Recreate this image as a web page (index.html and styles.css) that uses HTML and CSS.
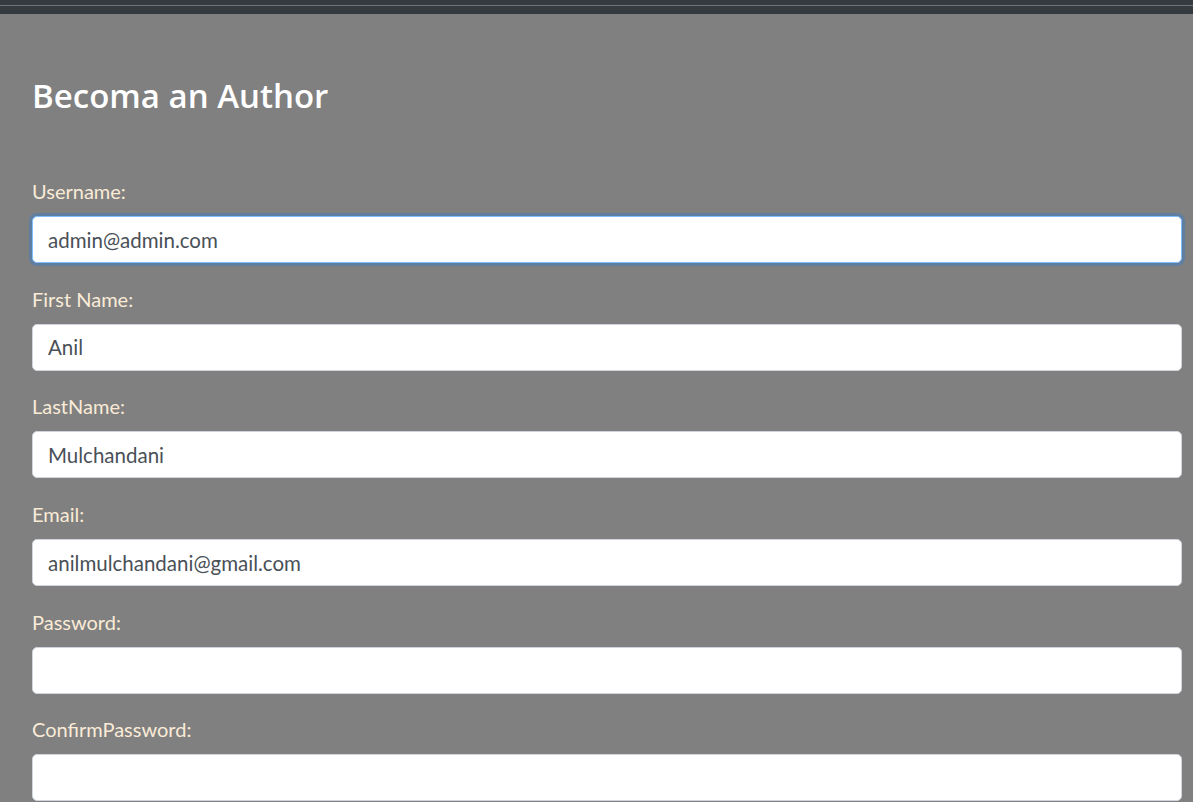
FILE: index.html
```html
<!DOCTYPE html>
<html lang="en">
<head>
<meta charset="utf-8">
<title>Becoma an Author</title>
<link rel="stylesheet" href="styles.css">
</head>
<body>
<div class="topbar"><div class="topbar-line"></div></div>
<main class="page">
  <h2 class="title">Becoma an Author</h2>
  <form class="form">
    <div class="group">
      <label class="label" for="username">Username:</label>
      <input class="field field-focus" id="username" type="text" value="admin@admin.com">
    </div>
    <div class="group">
      <label class="label" for="first">First Name:</label>
      <input class="field" id="first" type="text" value="Anil">
    </div>
    <div class="group">
      <label class="label" for="last">LastName:</label>
      <input class="field" id="last" type="text" value="Mulchandani">
    </div>
    <div class="group">
      <label class="label" for="email">Email:</label>
      <input class="field" id="email" type="text" value="anilmulchandani@gmail.com">
    </div>
    <div class="group">
      <label class="label" for="pw">Password:</label>
      <input class="field" id="pw" type="password" value="">
    </div>
    <div class="group">
      <label class="label" for="cpw">ConfirmPassword:</label>
      <input class="field" id="cpw" type="password" value="">
    </div>
  </form>
</main>
</body>
</html>
```
FILE: styles.css
```css
* { box-sizing: border-box; }
html, body {
  margin: 0;
  padding: 0;
  height: 100%;
}
body {
  background: #808080;
  font-family: Lato, "Open Sans", sans-serif;
  overflow: hidden;
}
.topbar {
  height: 14px;
  background: #343a40;
  padding-top: 5px;
}
.topbar-line {
  height: 1px;
  background: #6f7173;
}
.page {
  padding: 62px 11px 0 32px;
}
.title {
  margin: 0;
  height: 38px;
  font-family: "Open Sans", Lato, sans-serif;
  font-size: 33px;
  line-height: 40px;
  font-weight: 600;
  color: #ffffff;
}
.form {
  display: flex;
  flex-direction: column;
  gap: 20.7px;
  margin-top: 62px;
}
.group {
  display: flex;
  flex-direction: column;
}
.label {
  font-size: 20px;
  line-height: 30px;
  color: #faebd7;
  margin-bottom: 10px;
}
.field {
  display: block;
  width: 100%;
  height: 47px;
  padding: 0 15px;
  font-family: Lato, "Open Sans", sans-serif;
  font-size: 20.5px;
  color: #495057;
  background: #ffffff;
  border: 1px solid #ced4da;
  border-radius: 5px;
  outline: none;
}
.field-focus {
  border-color: #80bdff;
  box-shadow: 0 0 0 3px rgba(0, 123, 255, 0.25);
}
```
